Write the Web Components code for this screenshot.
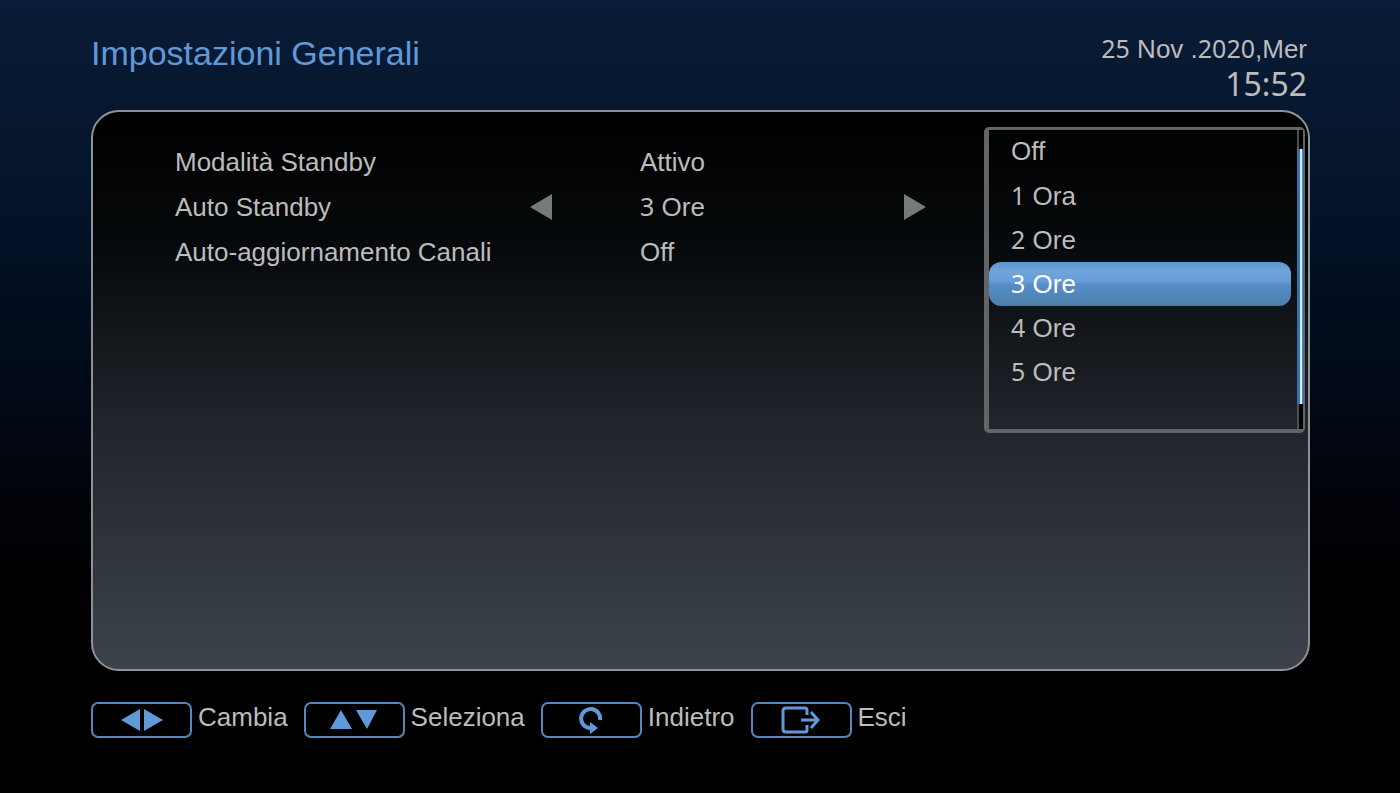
<!DOCTYPE html>
<html lang="it">
<head>
<meta charset="utf-8">
<meta name="viewport" content="width=device-width, initial-scale=1">
<title>Impostazioni Generali</title>
<style>
  html { background: #000; }
  body {
    margin: 0;
    --blue: #5f99d8;
    --text: #bcbcbc;
    --digits: "Noto Sans", "Open Sans", sans-serif;
    color: var(--text);
    font: 26px/44px "Liberation Sans", Arial, sans-serif;
  }
</style>
</head>
<body>
<stb-screen>
  <stb-header slot="header">
    Impostazioni Generali
    <stb-clock slot="clock"></stb-clock>
  </stb-header>
  <stb-panel>
    <stb-settings></stb-settings>
    <stb-menu slot="menu"></stb-menu>
  </stb-panel>
  <stb-keys slot="footer">
    <stb-key>
      <svg slot="icon" width="42" height="24" viewBox="0 0 42 24" fill="currentColor"><path d="M0 12 19 1V23ZM23 1V23L42 12Z"/></svg>
      Cambia
    </stb-key>
    <stb-key>
      <svg slot="icon" width="48" height="20" viewBox="0 0 48 20" fill="currentColor"><path d="M0 19 11 0 22 19ZM26 0H47L37 19Z"/></svg>
      Seleziona
    </stb-key>
    <stb-key>
      <svg slot="icon" width="24" height="28" viewBox="0 0 24 28" fill="none" stroke="currentColor" stroke-width="4"><path d="M21 14A9.500 9.500 0 1 0 11 22"/><path d="M11 16 19 22 11 28Z" fill="currentColor" stroke="none"/></svg>
      Indietro
    </stb-key>
    <stb-key>
      <svg slot="icon" width="40" height="28" viewBox="0 0 40 28" fill="none" stroke="currentColor" stroke-width="3"><path d="M26 9V4Q26 2 24 2H5Q2 2 2 5V23Q2 26 5 26H24Q26 26 26 24V19M20 14H37M30 6 37 14 30 22"/></svg>
      Esci
    </stb-key>
  </stb-keys>
</stb-screen>

<script>
const define = (name, html) => customElements.define(name, class extends HTMLElement {
  constructor() {
    super();
    const t = document.createElement('template');
    t.innerHTML = html;
    this.attachShadow({ mode: 'open' }).append(t.content.cloneNode(true));
  }
});

define('stb-screen', `
  <style>
    :host {
      display: flex; flex-direction: column; box-sizing: border-box;
      min-height: 100vh; padding: 0 90px 55px 91px;
      background: linear-gradient(#0a1b37 0%, #06172f 14%, #031226 30%, #020a18 48%, #01030a 62%, #000 74%);
    }
    main { flex: 1; display: flex; }
    footer { margin-top: 31px; }
  </style>
  <slot name="header"></slot>
  <main><slot></slot></main>
  <footer><slot name="footer"></slot></footer>
`);

define('stb-header', `
  <style>
    :host { display: block; }
    header { display: flex; justify-content: space-between; height: 110px; }
    h1 { margin: 31px 0 0; font-size: 34px; font-weight: 400; line-height: 44px; color: var(--blue); white-space: nowrap; }
  </style>
  <header><h1><slot></slot></h1><slot name="clock"></slot></header>
`);

define('stb-clock', `
  <style>
    :host { display: block; padding: 30px 3px 0 0; text-align: right; white-space: nowrap; }
    div { height: 36px; line-height: 36px; white-space: pre; }
    b { font: 25px/36px var(--digits); }
    .time { font: 32px/36px var(--digits); }
  </style>
  <div><b>25</b> Nov .<b>2020</b>,Mer</div>
  <div class="time">15:52</div>
`);

define('stb-panel', `
  <style>
    :host {
      flex: 1; display: flex; box-sizing: border-box;
      border: 2px solid #8d9297; border-radius: 28px;
      background: linear-gradient(#000 0%, #05080a 22%, #15181c 42%, #1f232a 54%, #2c3238 75%, #3c434a 100%);
    }
  </style>
  <slot></slot><slot name="menu"></slot>
`);

define('stb-settings', `
  <style>
    :host { flex: 1; display: block; padding: 27px 58px 28px 82px; }
    .row { display: grid; grid-template-columns: 355fr 22px 88px 264fr 22px; align-items: center; height: 45px; white-space: nowrap; }
    .value { grid-column: 4; }
    b { font: 25px/44px var(--digits); }
    button { padding: 0; border: 0; background: none; color: #777a7a; display: flex; cursor: pointer; }
    .next { grid-column: 5; }
  </style>
  <div class="row"><span>Modalità Standby</span><span class="value">Attivo</span></div>
  <div class="row">
    <span>Auto Standby</span>
    <button aria-label="Precedente"><svg width="22" height="26" viewBox="0 0 22 26" fill="currentColor"><path d="M0 13 22 0V26Z"/></svg></button>
    <span class="value"><b>3</b> Ore</span>
    <button class="next" aria-label="Successivo"><svg width="22" height="26" viewBox="0 0 22 26" fill="currentColor"><path d="M22 13 0 0V26Z"/></svg></button>
  </div>
  <div class="row"><span>Auto-aggiornamento Canali</span><span class="value">Off</span></div>
`);

define('stb-menu', `
  <style>
    :host {
      display: flex; align-self: flex-start; box-sizing: border-box;
      width: 321px; margin: 15px 3px 15px 0;
      border: solid #616567; border-width: 3px 2px 4px 5px; border-radius: 5px;
    }
    fieldset { flex: 1; min-width: 0; margin: 0 6px 0 0; padding: 0 0 35px; border: 0; }
    label { display: block; height: 44px; padding-left: 22px; border-radius: 12px; line-height: 43px; white-space: nowrap; cursor: pointer; }
    input { appearance: none; position: absolute; margin: 0; width: 0; height: 0; }
    b { font: 25px/43px var(--digits); }
    label:has(:checked) {
      color: #fff;
      background: linear-gradient(#5b94cf 0%, #72a6da 20%, #649cda 45%, #558dc6 52%, #4c80ab 100%);
    }
    .track { width: 4px; padding: 19px 0 25px; border-left: 2px solid #4c5053; background: #000; display: flex; }
    .thumb { flex: 1; margin-left: -2px; background: linear-gradient(90deg, #3a70ad 0 3px, #c5f3ff 3px 5px, #4f87c0 5px); }
  </style>
  <fieldset aria-label="Auto Standby">
    <label><input type="radio" name="ore">Off</label>
    <label><input type="radio" name="ore"><b>1</b> Ora</label>
    <label><input type="radio" name="ore"><b>2</b> Ore</label>
    <label><input type="radio" name="ore" checked><b>3</b> Ore</label>
    <label><input type="radio" name="ore"><b>4</b> Ore</label>
    <label><input type="radio" name="ore"><b>5</b> Ore</label>
  </fieldset>
  <div class="track"><div class="thumb"></div></div>
`);

define('stb-keys', `
  <style>:host { display: flex; flex-wrap: wrap; gap: 16px; }</style>
  <slot></slot>
`);

define('stb-key', `
  <style>
    :host { display: block; }
    button {
      display: flex; gap: 6px; padding: 0; border: 0; background: none;
      color: inherit; font: inherit; line-height: 30px; white-space: nowrap; cursor: pointer;
    }
    .cap {
      display: flex; align-items: center; justify-content: center; box-sizing: border-box;
      width: 101px; height: 36px; border: 2px solid #5487c0; border-radius: 7px; color: var(--blue);
    }
  </style>
  <button><span class="cap"><slot name="icon"></slot></span><span><slot></slot></span></button>
`);
</script>
</body>
</html>
